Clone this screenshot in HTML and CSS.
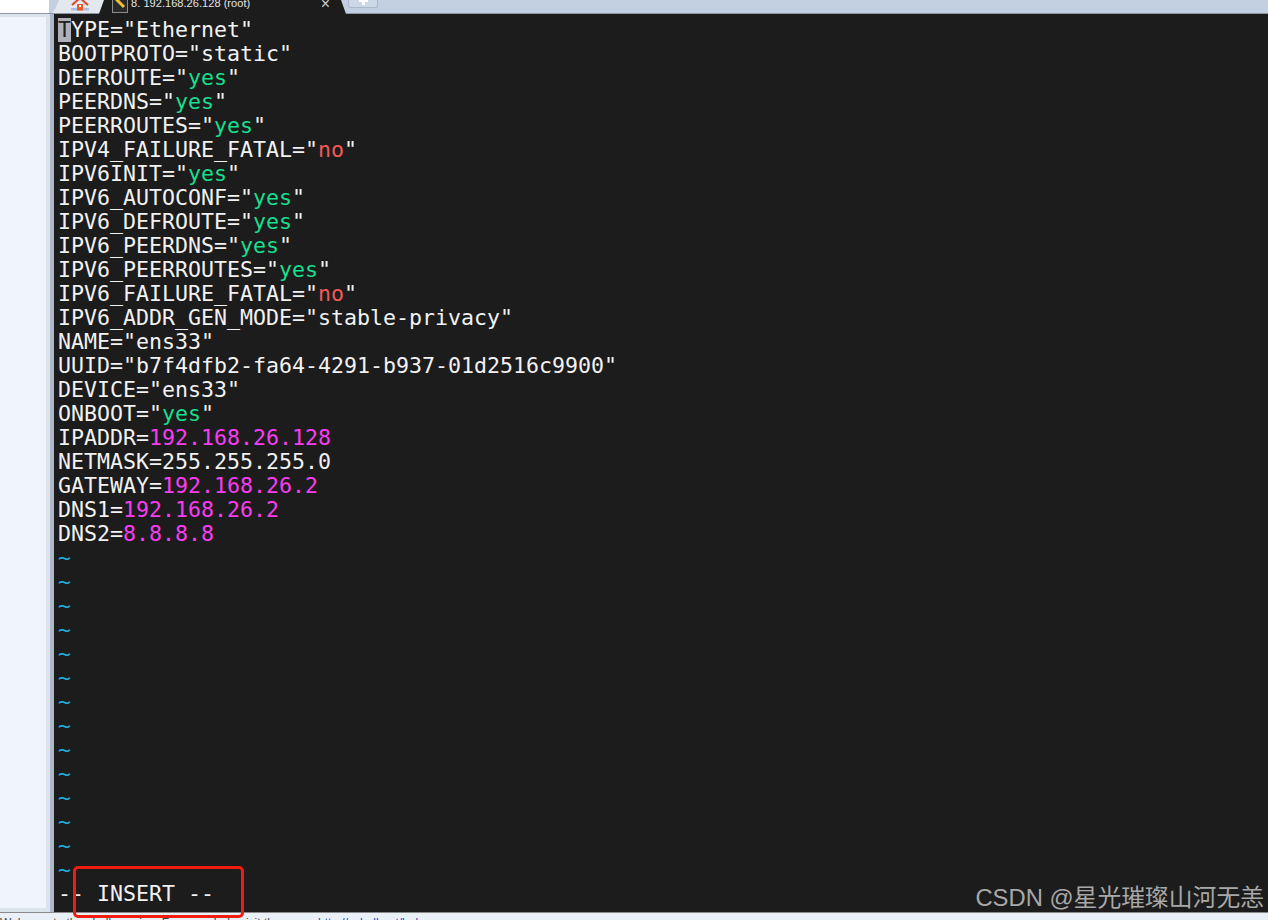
FILE: index.html
```html
<!DOCTYPE html>
<html lang="en">
<head>
<meta charset="utf-8">
<title>vi ifcfg-ens33</title>
<link rel="stylesheet" href="styles.css">
</head>
<body>
<div class="app">
  <header class="tabbar">
    <div class="addr"></div>
    <div class="tab tab-home">
      <svg class="home" width="20" height="13" viewBox="0 0 20 13"><path d="M2 5 10 -2l8 7" fill="none" stroke="#d8452e" stroke-width="2"/><path d="M7 4h6v6H7z" fill="#ee5a24"/><path d="M9 5h2v2H9z" fill="#fff"/><path d="M1 8h18v2.5H1z" fill="#a9bde6"/><path d="M7 7h6v3.500H7z" fill="#ee5a24"/></svg>
    </div>
    <div class="tab tab-active">
      <svg class="key" width="16" height="13" viewBox="0 0 16 13"><rect x="0.5" y="-2" width="15" height="14.500" fill="#2a2a2a" stroke="#8c8c8c"/><path d="M4 -1l8 8" stroke="#f2c230" stroke-width="3"/></svg>
      <span class="tab-title">8. 192.168.26.128 (root)</span>
      <span class="tab-close">×</span>
    </div>
    <div class="tab tab-new"><span class="plus"></span></div>
  </header>
  <main class="main">
    <aside class="side"><div class="side-inner"></div></aside>
    <section class="term">
<pre class="code"><span class="cursor">T</span>YPE="Ethernet"
BOOTPROTO="static"
DEFROUTE="<span class="g">yes</span>"
PEERDNS="<span class="g">yes</span>"
PEERROUTES="<span class="g">yes</span>"
IPV4_FAILURE_FATAL="<span class="r">no</span>"
IPV6INIT="<span class="g">yes</span>"
IPV6_AUTOCONF="<span class="g">yes</span>"
IPV6_DEFROUTE="<span class="g">yes</span>"
IPV6_PEERDNS="<span class="g">yes</span>"
IPV6_PEERROUTES="<span class="g">yes</span>"
IPV6_FAILURE_FATAL="<span class="r">no</span>"
IPV6_ADDR_GEN_MODE="stable-privacy"
NAME="ens33"
UUID="b7f4dfb2-fa64-4291-b937-01d2516c9900"
DEVICE="ens33"
ONBOOT="<span class="g">yes</span>"
IPADDR=<span class="m">192.168.26.128</span>
NETMASK=255.255.255.0
GATEWAY=<span class="m">192.168.26.2</span>
DNS1=<span class="m">192.168.26.2</span>
DNS2=<span class="m">8.8.8.8</span>
<span class="t">~</span>
<span class="t">~</span>
<span class="t">~</span>
<span class="t">~</span>
<span class="t">~</span>
<span class="t">~</span>
<span class="t">~</span>
<span class="t">~</span>
<span class="t">~</span>
<span class="t">~</span>
<span class="t">~</span>
<span class="t">~</span>
<span class="t">~</span>
<span class="t">~</span>
-- INSERT --</pre>
      <div class="redbox"></div>
      <div class="mark">CSDN @星光璀璨山河无恙</div>
    </section>
  </main>
  <footer class="strip"><span class="strip-lead">Welcome to the shell session. For more help visit the</span><span class="strip-link">http://xshell.net/help</span></footer>
</div>
</body>
</html>
```
FILE: styles.css
```css
* { box-sizing: border-box; }
html, body { margin: 0; padding: 0; }
body { width: 1268px; height: 920px; overflow: hidden; background: #fff; }
.app { display: flex; flex-direction: column; height: 920px; }
.tabbar { height: 14px; flex: none; display: flex; align-items: flex-start; background: linear-gradient(#c3d0e2 13px, #8a96a8 13px); overflow: hidden; }
.addr { width: 49px; height: 13px; flex: none; background: #fff; margin-right: 3px; }
.tab { display: flex; align-items: center; flex: none; overflow: hidden; }
.tab-home { width: 52px; height: 13px; background: #e3e7ee; justify-content: center; padding-left: 4px; clip-path: polygon(0 100%, 3px 9px, 7px 0, 100% 0, calc(100% - 5px) 100%); }
.tab-active { width: 247px; height: 14px; margin-left: -5px; background: #1c1c1c; padding-left: 13px; gap: 3px; clip-path: polygon(5px 0, calc(100% - 5px) 0, 100% 100%, 0 100%); }
.key { flex: none; margin-top: -1px; }
.tab-title { font: 11px/14px "Liberation Sans", sans-serif; letter-spacing: 0.05px; color: #e6e6e6; flex: 1; margin-top: -8px; white-space: nowrap; }
.tab-close { font: 16px/14px "Liberation Sans", sans-serif; color: #cfcfcf; margin-right: 16px; margin-top: -7px; }
.tab-new { width: 30px; height: 8px; margin-left: 2px; background: #cdd8e6; border: 1px solid #a9b8cc; border-top: 0; border-radius: 0 0 3px 3px; justify-content: center; align-items: flex-start; }
.plus { width: 9px; height: 6px; margin-top: -1px; background: linear-gradient(#fff, #fff) center / 3px 100% no-repeat, linear-gradient(#fff, #fff) 0 0 / 100% 3px no-repeat; }
.main { flex: 1; display: flex; min-height: 0; }
.side { width: 54px; flex: none; background: #dbe3ed; padding: 3px 4px 4px 0; border-right: 4px solid #aeb8c8; }
.side-inner { height: 100%; width: 46px; background: #eff4fd; }
.term { flex: 1; background: #1c1c1c; position: relative; }
.code { margin: 0; padding: 4px 0 0 4px; font: 21.6px/24px "DejaVu Sans Mono", monospace; color: #f2f2f2; }
.cursor { display: inline-block; height: 24px; background: #b0b0b8; color: #222; }
.g { color: #17df8e; }
.r { color: #f25a55; }
.m { color: #f83cf0; }
.t { color: #1ea8dc; }
.redbox { position: absolute; left: 19px; top: 852px; width: 171px; height: 52px; border: 3px solid #f01c10; border-radius: 5px; }
.mark { position: absolute; right: 4px; bottom: -2px; font: 23.8px/32px "Liberation Sans", "Noto Sans CJK SC", sans-serif; color: #a8a8a8; white-space: nowrap; }
.strip { height: 8px; flex: none; display: flex; background: #eaf0f7; border-top: 1px solid #8a8a8a; overflow: hidden; padding-top: 3px; font: 12px/14px "Liberation Sans", sans-serif; white-space: nowrap; }
.strip-lead { width: 318px; flex: none; color: #444; }
.strip-link { color: #2244cc; }
```
